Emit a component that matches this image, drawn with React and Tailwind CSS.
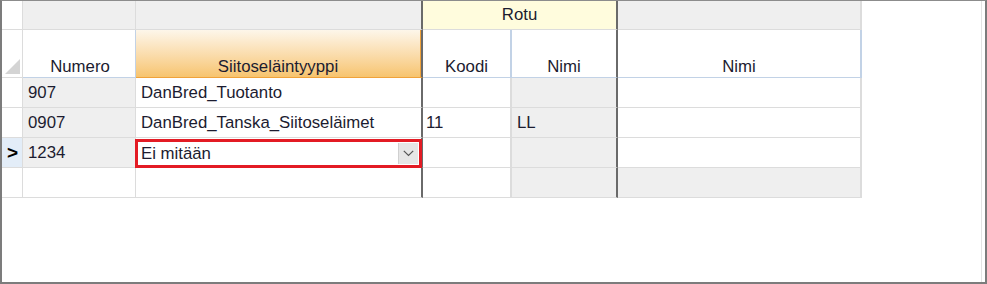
import React from "react";

const font = { fontFamily: '"Liberation Sans", Arial, sans-serif' };

function Row({ sel, numero, tyyppi, koodi, nimi, last, isNew, combo }) {
  const g = "bg-[#efefef]";
  return (
    <div className="flex h-[30px]">
      <div className={`w-[21px] h-full border-r border-b border-[#dcdcdc] ${sel ? "bg-[#e3edf8]" : "bg-white"} flex items-center justify-center`}>
        {sel && <span className="text-[19px] font-bold text-black leading-none -mt-[1px] ml-[1px]">&gt;</span>}
      </div>
      <div className={`w-[113px] h-full border-r border-b border-[#dcdcdc] ${isNew ? "bg-white" : g} flex items-center pl-[5px]`}>{numero}</div>
      <div className="relative w-[287px] h-full border-r-2 border-r-[#6a6a6a] border-b border-b-[#dcdcdc] bg-white flex items-center pl-[5px]">
        {combo ? (
          <div className="absolute left-[-1px] top-[1px] w-[287px] h-[29px] border-[3px] border-[#e31b24] bg-white flex items-center pl-[3px]">
            <span className="flex-1">Ei mitään</span>
            <div className="w-[20px] h-[21px] mr-[1px] bg-[#e6e6e6] border-l border-[#d0d0d0] flex items-center justify-center">
              <svg width="11" height="7" viewBox="0 0 11 7"><path d="M0.8 0.8 L5.5 5.5 L10.2 0.8" fill="none" stroke="#555" strokeWidth="1.2" /></svg>
            </div>
          </div>
        ) : (
          tyyppi
        )}
      </div>
      <div className="w-[89px] h-full border-r-2 border-b border-[#dcdcdc] bg-white flex items-center pl-[3px]">{koodi}</div>
      <div className={`w-[106px] h-full border-r-2 border-r-[#6a6a6a] border-b border-b-[#dcdcdc] ${g} flex items-center pl-[5px]`}>{nimi}</div>
      <div className={`w-[244px] h-full border-r-2 border-b border-[#dcdcdc] ${isNew ? g : "bg-white"} flex items-center pl-[5px]`}>{last}</div>
    </div>
  );
}

export default function App() {
  return (
    <div className="w-[987px] h-[284px] bg-white border-t border-t-[#8c8c8c] border-l-2 border-l-[#7c7c7c] border-r-2 border-r-[#7c7c7c] border-b-2 border-b-[#7c7c7c] overflow-hidden text-[16.8px] text-[#1c1c30]" style={font}>
      <div className="flex h-full">
        <div className="flex flex-col">
          {/* header row 1 */}
          <div className="flex h-[29px]">
            <div className="w-[21px] h-full bg-white border-r border-b border-[#dcdcdc]" />
            <div className="w-[113px] h-full bg-[#efefef] border-r border-b border-[#dcdcdc]" />
            <div className="w-[287px] h-full bg-[#efefef] border-b border-b-[#dcdcdc] border-r-2 border-r-[#6a6a6a]" />
            <div className="w-[195px] h-full bg-[#fffcdd] border-b border-b-[#dcdcdc] border-r-2 border-r-[#6a6a6a] flex items-center justify-center">Rotu</div>
            <div className="w-[244px] h-full bg-[#efefef] border-r-2 border-b border-[#dcdcdc]" />
          </div>
          {/* header row 2 */}
          <div className="flex h-[48px] leading-[17px]">
            <div className="relative w-[21px] h-full bg-white border-r border-b border-[#dcdcdc]">
              <svg className="absolute left-[2px] top-[28px]" width="17" height="17" viewBox="0 0 17 17"><polygon points="1,16 16,16 16,1" fill="#d4d4d4" /></svg>
            </div>
            <div className="w-[113px] h-full bg-white border-r border-b border-[#c2d2e6] flex items-end justify-center pb-[2px] pl-[2px]">Numero</div>
            <div className="w-[287px] h-full border-b border-b-[#f0a23a] border-r-2 border-r-[#6a6a6a] bg-gradient-to-b from-[#fdf6ea] to-[#f7c46e]">
              <span className="w-full text-center border-r border-[#f0a23a] h-full flex items-end justify-center pb-[2px]">Siitoseläintyyppi</span>
            </div>
            <div className="w-[89px] h-full bg-white border-r-2 border-b border-[#c2d2e6] flex items-end justify-center pb-[2px]">Koodi</div>
            <div className="w-[106px] h-full bg-white border-b border-b-[#c2d2e6] border-r-2 border-r-[#6a6a6a] flex items-end justify-center pb-[2px]">Nimi</div>
            <div className="w-[244px] h-full bg-white border-r-2 border-b border-[#c2d2e6] flex items-end justify-center pb-[2px]">Nimi</div>
          </div>
          <Row numero="907" tyyppi="DanBred_Tuotanto" />
          <Row numero="0907" tyyppi="DanBred_Tanska_Siitoseläimet" koodi="11" nimi="LL" />
          <Row sel numero="1234" combo />
          <Row isNew />
        </div>
        <div className="flex-1" />
        <div className="w-[1px] bg-[#e4e4e4] mr-[3px]" />
      </div>
    </div>
  );
}
